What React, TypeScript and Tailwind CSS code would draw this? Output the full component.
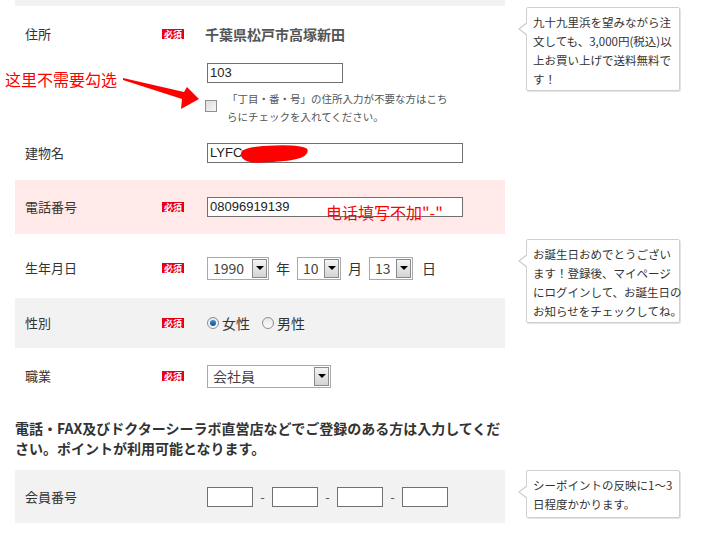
import React from "react";

const FONT = { fontFamily: '"Noto Sans CJK JP", "Noto Sans", sans-serif' };

function Badge() {
  return (
    <span className="inline-flex h-[10px] w-[22px] items-center justify-center bg-[#e60012] text-[9px] font-bold leading-none text-white">
      必須
    </span>
  );
}

function Row({
  label,
  required,
  className,
  children,
}: {
  label: string;
  required?: boolean;
  className: string;
  children: React.ReactNode;
}) {
  return (
    <div className={`flex pl-[10px] ${className}`}>
      <div className="flex w-[137px] shrink-0 items-center text-[13px] text-[#333]">{label}</div>
      <div className="flex w-[22px] shrink-0 items-center">{required && <Badge />}</div>
      <div className="ml-[23px] flex-1">{children}</div>
    </div>
  );
}

function TextBox({ w, value }: { w: string; value?: string }) {
  return (
    <div
      className={`${w} flex h-[20px] items-center border border-[#707070] bg-white px-[2px] text-[13px] text-[#222]`}
      style={{ fontFamily: '"Liberation Sans", Arial, sans-serif' }}
    >
      {value}
    </div>
  );
}

function Select({ w, value }: { w: string; value: string }) {
  return (
    <div className={`${w} flex h-[23px] items-stretch border border-[#a8a8b0] bg-white`}>
      <div className="flex flex-1 items-center pl-[5px] text-[14px] text-[#444]">{value}</div>
      <div className="m-px flex w-[15px] items-center justify-center border border-[#8a8a8a] bg-gradient-to-b from-[#f4f4f4] to-[#d4d4d4]">
        <span className="h-0 w-0 border-x-[4px] border-t-[4px] border-x-transparent border-t-black" />
      </div>
    </div>
  );
}

function Radio({ checked }: { checked?: boolean }) {
  return (
    <span className="flex h-[12px] w-[12px] items-center justify-center rounded-full border border-[#8d8d8d] bg-gradient-to-b from-[#e8e8e8] to-[#fafafa]">
      {checked && <span className="h-[6px] w-[6px] rounded-full bg-gradient-to-b from-[#3d8fd6] to-[#0a4f96]" />}
    </span>
  );
}

function Tip({ className, children }: { className: string; children: React.ReactNode }) {
  return (
    <div
      className={`relative w-[154px] whitespace-nowrap rounded-[2px] border border-[#cfcfcf] bg-white px-[6px] py-[5px] text-[11.5px] leading-[19px] text-[#333] shadow-[1px_1px_0_#e4e4e4] ${className}`}
    >
      <span className="absolute left-[-9px] top-[14px] h-0 w-0 border-y-[7px] border-r-[9px] border-y-transparent border-r-[#cfcfcf]" />
      <span className="absolute left-[-7px] top-[15px] h-0 w-0 border-y-[6px] border-r-[8px] border-y-transparent border-r-white" />
      {children}
    </div>
  );
}

export default function App() {
  return (
    <div className="relative h-[544px] w-[719px] overflow-hidden bg-white" style={FONT}>
      <div className="flex">
        <div className="ml-[15px] w-[490px] shrink-0">
          <div className="h-[6px] bg-[#f2f2f2]" />

          {/* 住所 */}
          <div className="flex h-[128px] pl-[10px] pt-[19px]">
            <div className="flex h-[18px] w-[137px] shrink-0 items-center text-[13px] text-[#333]">住所</div>
            <div className="flex h-[18px] w-[22px] shrink-0 items-center">
              <Badge />
            </div>
            <div className="ml-[21px] flex-1">
              <div className="h-[18px] text-[14px] font-bold leading-[18px] text-[#555]">千葉県松戸市高塚新田</div>
              <div className="ml-[2px] mt-[20px]">
                <TextBox w="w-[136px]" value="103" />
              </div>
              <div className="mt-[7px] flex gap-[10px]">
                <span className="mt-[10px] h-[12px] w-[12px] shrink-0 border border-[#8f8f8f] bg-gradient-to-br from-[#dcdcdc] to-[#f6f6f6]" />
                <p className="whitespace-nowrap text-[10.5px] leading-[18px] text-[#555]">
                  「丁目・番・号」の住所入力が不要な方はこち
                  <br />
                  らにチェックを入れてください。
                </p>
              </div>
            </div>
          </div>

          {/* 建物名 */}
          <Row label="建物名" className="h-[46px] pt-[9px] pb-[17px]">
            <TextBox w="w-[256px]" value="LYFC" />
          </Row>

          <Row label="電話番号" required className="h-[54px] items-center bg-[#ffe9e9]">
            <TextBox w="w-[256px]" value="08096919139" />
          </Row>

          <Row label="生年月日" required className="h-[64px] items-center pt-[4px]">
            <div className="flex items-center text-[14px] text-[#333]">
              <Select w="w-[62px]" value="1990" />
              <span className="mx-[7px]">年</span>
              <Select w="w-[44px]" value="10" />
              <span className="mx-[7px]">月</span>
              <Select w="w-[44px]" value="13" />
              <span className="ml-[9px]">日</span>
            </div>
          </Row>

          <Row label="性別" required className="h-[50px] items-center bg-[#f2f2f2]">
            <div className="flex items-center text-[14px] text-[#333]">
              <Radio checked />
              <span className="ml-[3px]">女性</span>
              <span className="ml-[12px]" />
              <Radio />
              <span className="ml-[3px]">男性</span>
            </div>
          </Row>

          <Row label="職業" required className="h-[56px] items-center">
            <Select w="w-[124px]" value="会社員" />
          </Row>

          <p className="mt-[14px] text-[14px] font-bold leading-[20px] text-[#333]">
            電話・FAX及びドクターシーラボ直営店などでご登録のある方は入力してくだ
            <br />
            さい。ポイントが利用可能となります。
          </p>

          <Row label="会員番号" className="mt-[12px] h-[53px] items-center bg-[#f2f2f2]">
            <div className="flex items-center text-[13px] text-[#555]">
              <TextBox w="w-[46px]" />
              <span className="w-[19px] text-center">-</span>
              <TextBox w="w-[46px]" />
              <span className="w-[19px] text-center">-</span>
              <TextBox w="w-[46px]" />
              <span className="w-[19px] text-center">-</span>
              <TextBox w="w-[46px]" />
            </div>
          </Row>
        </div>

        <div className="ml-[21px] flex flex-col">
          <Tip className="mt-[7px] h-[84px]">
            九十九里浜を望みながら注
            <br />
            文しても、3,000円(税込)以
            <br />
            上お買い上げで送料無料で
            <br />
            す！
          </Tip>
          <Tip className="mt-[148px] h-[84px]">
            お誕生日おめでとうござい
            <br />
            ます！登録後、マイページ
            <br />
            にログインして、お誕生日の
            <br />
            お知らせをチェックしてね。
          </Tip>
          <Tip className="mt-[147px] h-[48px]">
            シーポイントの反映に1〜3
            <br />
            日程度かかります。
          </Tip>
        </div>
      </div>

      {/* annotations drawn over the screenshot */}
      <div className="absolute left-[5px] top-[69px] text-[16px] leading-[20px] text-[#ff0000]">这里不需要勾选</div>
      <svg className="absolute left-0 top-0" width="719" height="544" viewBox="0 0 719 544">
        <polygon points="123,78 184,92 187,87 199,99 181,109 182,99 123,80" fill="#ff0000" />
        <path
          d="M243,152 C250,146 300,145 306,150 C308,157 290,160 262,161 C250,162 240,159 243,152 Z"
          fill="#ff0000"
          stroke="#ff0000"
          strokeWidth="3"
          strokeLinejoin="round"
        />
      </svg>
      <div className="absolute left-[326px] top-[202px] text-[16px] leading-[20px] text-[#ff0000]">电话填写不加"-"</div>
    </div>
  );
}
